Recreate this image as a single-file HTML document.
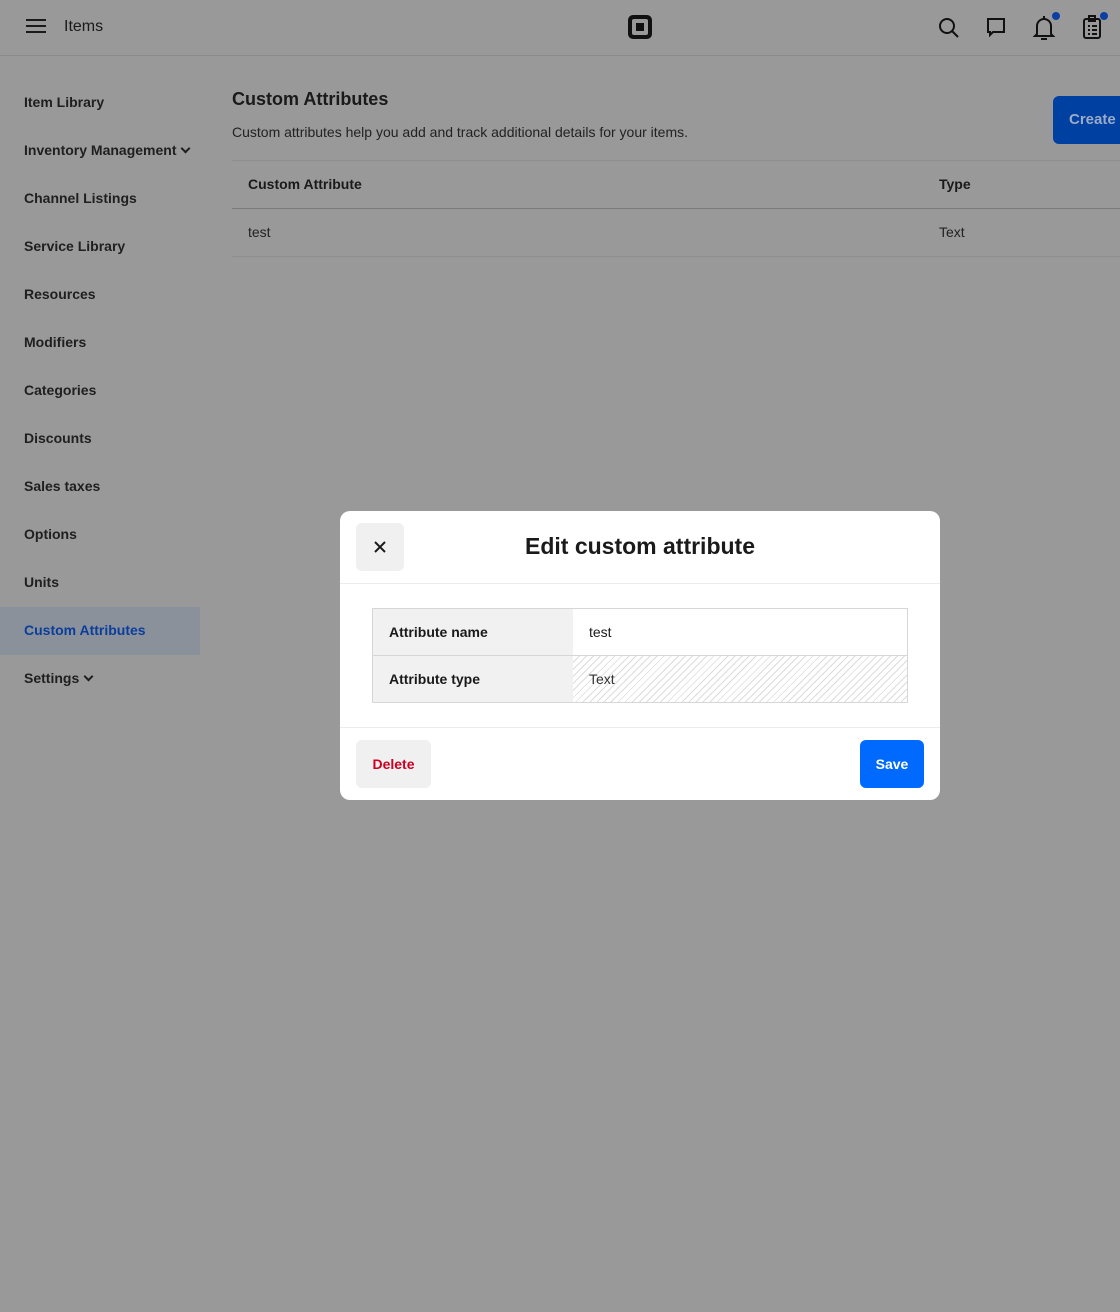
<!DOCTYPE html>
<html><head><meta charset="utf-8"><style>
*{box-sizing:border-box;margin:0;padding:0}
body{width:1120px;height:1312px;background:#999;font-family:"Liberation Sans",sans-serif;color:#1a1a1a;position:relative;overflow:hidden}
.top{position:absolute;left:0;top:0;width:1120px;height:56px;border-bottom:1px solid #8a8a8a}
.abs{position:absolute}
.nav{position:absolute;left:24px;font-size:14px;font-weight:bold;color:#1f1f1f}
.sel{position:absolute;left:0;top:607px;width:200px;height:48px;background:#8a919b}
.chev{display:inline-block;width:7px;height:7px;border-right:2px solid #1f1f1f;border-bottom:2px solid #1f1f1f;transform:rotate(45deg);margin-left:6px;position:relative;top:-3px}
.modal{position:absolute;left:340px;top:511px;width:600px;height:289px;background:#fff;border-radius:10px}
</style></head><body>
<div class="top">
  <div class="abs" style="left:26px;top:19px;width:20px;height:2px;background:#1a1a1a"></div>
  <div class="abs" style="left:26px;top:25px;width:20px;height:2px;background:#1a1a1a"></div>
  <div class="abs" style="left:26px;top:31px;width:20px;height:2px;background:#1a1a1a"></div>
  <div class="abs" style="left:64px;top:18px;font-size:16px;color:#1a1a1a">Items</div>
  <div class="abs" style="left:628px;top:15px;width:24px;height:24px;background:#111;border-radius:5px"></div>
  <div class="abs" style="left:632px;top:19px;width:16px;height:16px;background:#999;border-radius:2px"></div>
  <div class="abs" style="left:636px;top:23px;width:8px;height:8px;background:#111"></div>
  <svg class="abs" style="left:936px;top:15px" width="26" height="26" viewBox="0 0 26 26" fill="none" stroke="#111" stroke-width="2"><circle cx="11" cy="11" r="7"/><path d="M16 16l6 6"/></svg>
  <svg class="abs" style="left:984px;top:15px" width="26" height="26" viewBox="0 0 26 26" fill="none" stroke="#111" stroke-width="2"><path d="M4 4h16v13H9l-3 3v-3H4z"/></svg>
  <svg class="abs" style="left:1031px;top:13px" width="26" height="28" viewBox="0 0 26 28" fill="none" stroke="#111" stroke-width="2"><path d="M6 21V13a7 7 0 0 1 14 0v8l2 2H4z M13 3v3"/><path d="M10 26h6"/></svg>
  <div class="abs" style="left:1052px;top:12px;width:8px;height:8px;border-radius:50%;background:#0b3fa0"></div>
  <svg class="abs" style="left:1080px;top:13px" width="26" height="28" viewBox="0 0 26 28" fill="none" stroke="#111" stroke-width="2"><rect x="4" y="6" width="16" height="19" rx="2"/><rect x="9" y="3" width="6" height="5"/><path d="M8 13h2M12 13h5M8 17h2M12 17h5M8 21h2M12 21h5"/></svg>
  <div class="abs" style="left:1100px;top:12px;width:8px;height:8px;border-radius:50%;background:#0b3fa0"></div>
</div>
<div class="sel"></div>
<div class="nav" style="top:94px">Item Library</div>
<div class="nav" style="top:142px">Inventory Management<span class="chev"></span></div>
<div class="nav" style="top:190px">Channel Listings</div>
<div class="nav" style="top:238px">Service Library</div>
<div class="nav" style="top:286px">Resources</div>
<div class="nav" style="top:334px">Modifiers</div>
<div class="nav" style="top:382px">Categories</div>
<div class="nav" style="top:430px">Discounts</div>
<div class="nav" style="top:478px">Sales taxes</div>
<div class="nav" style="top:526px">Options</div>
<div class="nav" style="top:574px">Units</div>
<div class="nav" style="top:622px;color:#0a3e9a">Custom Attributes</div>
<div class="nav" style="top:670px">Settings<span class="chev"></span></div>

<div class="abs" style="left:232px;top:89px;font-size:18px;font-weight:bold">Custom Attributes</div>
<div class="abs" style="left:232px;top:124px;font-size:14px;color:#222">Custom attributes help you add and track additional details for your items.</div>
<div class="abs" style="left:1053px;top:96px;width:90px;height:48px;background:#0040a0;border-radius:6px;color:#9aaac8;font-size:15px;font-weight:bold;padding:15px 0 0 16px">Create</div>
<div class="abs" style="left:232px;top:160px;width:888px;height:1px;background:#8e8e8e"></div>
<div class="abs" style="left:248px;top:176px;font-size:14px;font-weight:bold">Custom Attribute</div>
<div class="abs" style="left:939px;top:176px;font-size:14px;font-weight:bold">Type</div>
<div class="abs" style="left:232px;top:208px;width:888px;height:1px;background:#7a7a7a"></div>
<div class="abs" style="left:248px;top:224px;font-size:14px;color:#222">test</div>
<div class="abs" style="left:939px;top:224px;font-size:14px;color:#222">Text</div>
<div class="abs" style="left:232px;top:256px;width:888px;height:1px;background:#8e8e8e"></div>

<div class="modal">
  <div class="abs" style="left:16px;top:12px;width:48px;height:48px;background:#f0f0f0;border-radius:6px"></div>
  <svg class="abs" style="left:32px;top:28px" width="16" height="16" viewBox="0 0 16 16" stroke="#1a1a1a" stroke-width="2"><path d="M3 3l10 10M13 3L3 13"/></svg>
  <div class="abs" style="left:0;width:600px;top:22px;text-align:center;font-size:23px;font-weight:bold;color:#1a1a1a">Edit custom attribute</div>
  <div class="abs" style="left:0;top:72px;width:600px;height:1px;background:#ececec"></div>
  <div class="abs" style="left:32px;top:97px;width:536px;height:95px;border:1px solid #d6d6d6">
    <div class="abs" style="left:0;top:0;width:200px;height:93px;background:#f1f1f1"></div>
    <div class="abs" style="left:200px;top:47px;width:334px;height:46px;background:repeating-linear-gradient(135deg,#fff 0 4px,#dcdcdc 4px 5px)"></div>
    <div class="abs" style="left:0;top:46px;width:534px;height:1px;background:#d6d6d6"></div>
    <div class="abs" style="left:16px;top:15px;font-size:14px;font-weight:bold">Attribute name</div>
    <div class="abs" style="left:216px;top:15px;font-size:14px">test</div>
    <div class="abs" style="left:16px;top:62px;font-size:14px;font-weight:bold">Attribute type</div>
    <div class="abs" style="left:216px;top:62px;font-size:14px;color:#333">Text</div>
  </div>
  <div class="abs" style="left:0;top:216px;width:600px;height:1px;background:#ececec"></div>
  <div class="abs" style="left:16px;top:229px;width:75px;height:48px;background:#f0f0f0;border-radius:6px;color:#cc0023;font-size:14px;font-weight:bold;text-align:center;line-height:48px">Delete</div>
  <div class="abs" style="left:520px;top:229px;width:64px;height:48px;background:#006aff;border-radius:6px;color:#fff;font-size:14px;font-weight:bold;text-align:center;line-height:48px">Save</div>
</div>
</body></html>
